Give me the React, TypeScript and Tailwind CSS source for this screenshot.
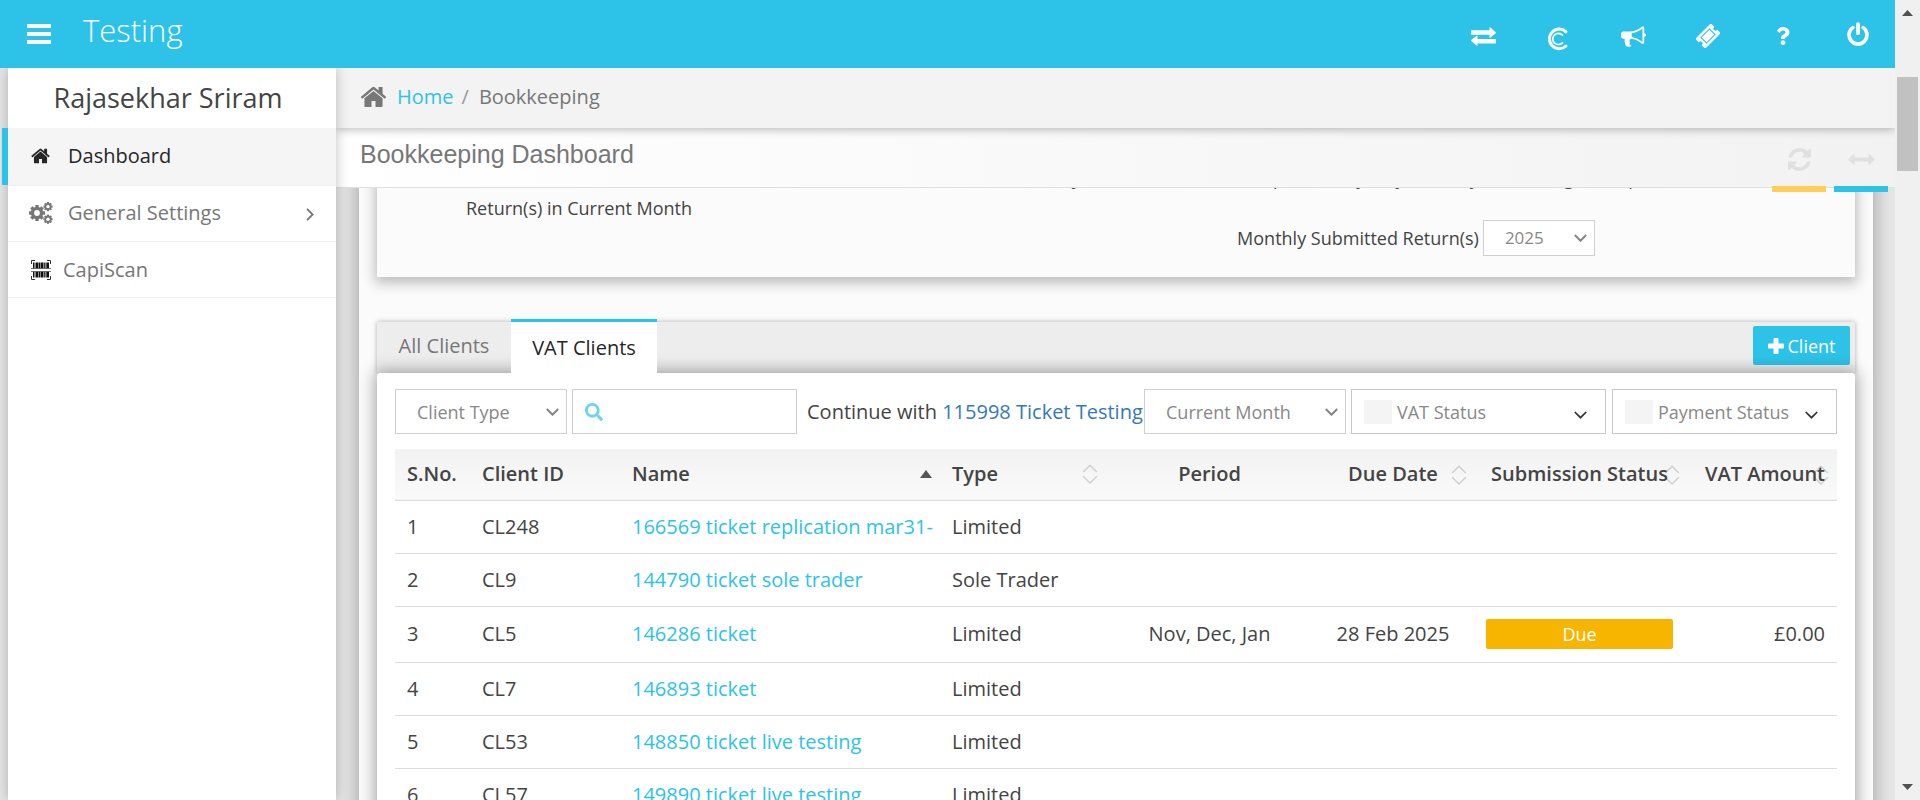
import React from "react";
import { FaQuestion, FaSearch } from "react-icons/fa";

function House({ className }: { className: string }) {
  return (
    <svg viewBox="0 200 1664 1400" className={className} fill="currentColor" aria-hidden="true">
      <path d="M1408 992v480q0 26-19 45t-45 19H960v-384H704v384H320q-26 0-45-19t-19-45V992q0-1 .5-3t.5-3l575-474 575 474q1 2 1 6zm223-69l-62 74q-8 9-21 11h-3q-13 0-21-7L832 424 140 1001q-12 8-24 7-13-2-21-11l-62-74q-8-10-7-23.500t11-21.500l719-599q32-26 76-26t76 26l244 204V288q0-14 9-23t23-9h192q14 0 23 9t9 23v408l219 182q10 8 11 21.500t-7 23.500z" />
    </svg>
  );
}

function Exchange() {
  return (
    <svg viewBox="0 0 25 19" className="h-[19px] w-[25px]" fill="currentColor" aria-hidden="true">
      <path d="M0 3.200h18.500V.6q0-.6.600-.4L24.800 5.200q.4.500 0 1l-5.700 4.600q-.6.200-.6-.4V7.700H0zM25 16.400H6.500v2q0 .6-.6.300L.2 14.100q-.4-.5 0-1L5.900 8.500q.6-.2.600.4v3H25z" />
    </svg>
  );
}

function CapiumLogo() {
  return (
    <svg viewBox="0 0 22 24" className="mt-1.5 h-6 w-[22px]" fill="none" stroke="currentColor" aria-hidden="true">
      <path d="M19 4.800A9.800 9.800 0 1 0 19 19" strokeWidth="3" strokeLinecap="round" />
      <path d="M15.500 8.200A5.600 5.600 0 1 0 15.500 15.800" strokeWidth="1.700" strokeLinecap="round" />
    </svg>
  );
}

function Bullhorn() {
  return (
    <svg viewBox="0 0 1792 1664" className="h-6 w-[25px]" fill="currentColor" aria-hidden="true">
      <path d="M1664 640q53 0 90.500 37.500T1792 768t-37.500 90.500T1664 896v384q0 52-38 90t-90 38q-417-347-812-380-58 19-91 66t-31 100.500 40 92.500q-20 33-23 65.500t6 58 33.500 55 48 50T768 1506q-29 58-111.500 83t-168.500 11.500T356 1545q-7-23-29.500-87.500t-32-94.500-23-89-15-101 3.500-98.500T282 1024H160q-66 0-113-47T0 864V672q0-66 47-113t113-47h480q435 0 896-384 52 0 90 38t38 90v384zm-128 604V290q-394 302-768 343v270q377 42 768 341z" />
    </svg>
  );
}

function Ticket() {
  return (
    <svg viewBox="0 0 24 24" className="h-6 w-6" aria-hidden="true">
      <g transform="rotate(-45 12 12)">
        <path
          d="M1.500 5.500h21v4a2.500 2.500 0 0 0 0 5v4h-21v-4a2.500 2.500 0 0 0 0-5z"
          fill="currentColor"
          stroke="currentColor"
          strokeLinejoin="round"
        />
        <rect x="6" y="8" width="12" height="8" fill="none" stroke="#2dc3e8" />
      </g>
    </svg>
  );
}

function Power() {
  return (
    <svg viewBox="0 0 22 24" className="-mt-1 h-6 w-[22px]" fill="none" stroke="currentColor" strokeLinecap="round" aria-hidden="true">
      <path d="M5.800 5.600a9 9 0 1 0 10.400 0" strokeWidth="3.600" />
      <path d="M11 2.200v9" strokeWidth="3.800" />
    </svg>
  );
}

function Gear({ cx, cy, r, hole, w }: { cx: number; cy: number; r: number; hole: number; w: number }) {
  return (
    <g>
      {[0, 45, 90, 135].map((angle) => (
        <rect key={angle} x={cx - w / 2} y={cy - r} width={w} height={r * 2} transform={`rotate(${angle} ${cx} ${cy})`} />
      ))}
      <circle cx={cx} cy={cy} r={r * 0.78} />
      <circle cx={cx} cy={cy} r={hole} fill="#fff" />
    </g>
  );
}

function Cogs() {
  return (
    <svg viewBox="0 0 24 22" className="h-[22px] w-6" fill="currentColor" aria-hidden="true">
      <Gear cx={8} cy={11} r={8} hole={2.9} w={3.4} />
      <Gear cx={19} cy={4.6} r={4.6} hole={1.7} w={2} />
      <Gear cx={19} cy={17.2} r={4.6} hole={1.7} w={2} />
    </svg>
  );
}

function Barcode() {
  return (
    <svg viewBox="0 0 20 20" className="h-5 w-5" aria-hidden="true">
      <path d="M.5 4V.5H4M16 .5h3.500V4M.5 16v3.500H4M16 19.500h3.500V16" fill="none" stroke="#333" />
      <path
        d="M2 2.500h1.500v6H2zM4.500 2.500h3v6h-3zM8 2.500h1.500v6H8zM10 2.500h2.500v6H10zM13.200 2.500h1.300v6h-1.300zM15.300 2.500H18v6h-2.700zM2 11.500h1.500v6H2zM4.500 11.500h3v6h-3zM8 11.500h1.500v6H8zM10 11.500h2.500v6H10zM13.200 11.500h1.300v6h-1.300zM15.300 11.500H18v6h-2.700z"
        fill="#111"
      />
      <path d="M0 8.500h20M0 11.500h20" stroke="#555" strokeWidth=".8" />
    </svg>
  );
}

function Refresh() {
  return (
    <svg viewBox="0 0 1536 1536" className="h-[23px] w-[23px]" fill="currentColor" aria-hidden="true">
      <path d="M1511 928q0 5-1 7-64 268-268 434.500T764 1536q-146 0-282.500-55T238 1324l-129 129q-19 19-45 19t-45-19-19-45V960q0-26 19-45t45-19h448q26 0 45 19t19 45-19 45l-137 137q71 66 161 102t187 36q134 0 250-65t186-179q11-17 53-117 8-23 30-23h192q13 0 22.500 9.500t9.500 22.500zm25-800v448q0 26-19 45t-45 19h-448q-26 0-45-19t-19-45 19-45l138-138Q969 256 768 256q-134 0-250 65T332 500q-11 17-53 117-8 23-30 23H50q-13 0-22.500-9.500T18 608v-7q65-268 270-434.500T768 0q146 0 284 55.500T1297 212l130-129q19-19 45-19t45 19 19 45z" />
    </svg>
  );
}

function ArrowsH() {
  return (
    <svg viewBox="0 0 27 11" className="h-[11px] w-[27px]" fill="currentColor" aria-hidden="true">
      <path d="M0 5.500L5.500.3q1-.5 1 .7v2.500h14V1q0-1.200 1-.7L27 5.500l-5.500 5.200q-1 .5-1-.7V7.500h-14V10q0 1.200-1 .7z" />
    </svg>
  );
}

function Chevron({ className, weight }: { className: string; weight: number }) {
  return (
    <svg viewBox="0 0 13 8" className={className} fill="none" stroke="currentColor" strokeWidth={weight} aria-hidden="true">
      <path d="M.8 1l5.700 5.700L12.200 1" />
    </svg>
  );
}

function SortIcon() {
  return (
    <svg viewBox="0 0 16 20" className="h-5 w-4" fill="none" stroke="#cfcfcf" strokeWidth="1.400" aria-hidden="true">
      <path d="M1.200 8L8 1.200 14.800 8M1.200 12.200L8 19l6.800-6.800" />
    </svg>
  );
}

function PlainSelect({ label, value, className, size }: { label: string; value: string; className: string; size: string }) {
  return (
    <div className={`relative shrink-0 ${className}`}>
      <select
        aria-label={label}
        className={`h-full w-full appearance-none border border-[#d0d0d0] bg-white pr-6 pl-[21px] text-[#888] ${size}`}
      >
        <option>{value}</option>
      </select>
      <Chevron className="pointer-events-none absolute top-1/2 right-2 h-2 w-[13px] -translate-y-1/2 text-[#858585]" weight={2} />
    </div>
  );
}

function MultiSelect({ label, className }: { label: string; className: string }) {
  return (
    <button
      type="button"
      className={`flex h-[45px] shrink-0 items-center border border-[#c8c8c8] bg-white pl-3 text-lg text-[#888] ${className}`}
    >
      <span className="mr-[5px] h-6 w-7 bg-[#f4f4f4]" />
      <span className="flex-1 text-left">{label}</span>
      <Chevron className="mt-1.5 mr-[18px] h-2 w-[13px] text-[#333]" weight={1.7} />
    </button>
  );
}

const clients = [
  { id: "CL248", name: "166569 ticket replication mar31-", type: "Limited" },
  { id: "CL9", name: "144790 ticket sole trader", type: "Sole Trader" },
  {
    id: "CL5",
    name: "146286 ticket",
    type: "Limited",
    period: "Nov, Dec, Jan",
    due: "28 Feb 2025",
    status: "Due",
    amount: "£0.00",
  },
  { id: "CL7", name: "146893 ticket", type: "Limited" },
  { id: "CL53", name: "148850 ticket live testing", type: "Limited" },
  { id: "CL57", name: "149890 ticket live testing", type: "Limited" },
];

const topButton = "flex h-8 w-8 items-center justify-center";

export default function App() {
  return (
    <div className="flex h-screen overflow-hidden bg-[#e6e6e6] font-['Open_Sans','Noto_Sans',sans-serif] text-[20px] text-[#444]">
      <div className="flex min-w-0 flex-1 flex-col overflow-hidden">
        <header className="relative z-30 flex h-[68px] shrink-0 items-center bg-[#2dc3e8] text-white">
          <button type="button" aria-label="Toggle menu" className="ml-[27px]">
            <svg viewBox="0 0 24 20" className="h-5 w-6" fill="currentColor" aria-hidden="true">
              <path d="M0 0h24v4H0zM0 8h24v4H0zM0 16h24v4H0z" />
            </svg>
          </button>
          <span className="mb-2 ml-8 text-[31px] font-light">Testing</span>
          <nav className="mr-[21px] ml-auto flex items-center gap-[43px] pt-1">
            <button type="button" aria-label="Switch" className={topButton}><Exchange /></button>
            <button type="button" aria-label="Capium" className={topButton}><CapiumLogo /></button>
            <button type="button" aria-label="Announcements" className={topButton}><Bullhorn /></button>
            <button type="button" aria-label="Tickets" className={topButton}><Ticket /></button>
            <button type="button" aria-label="Help" className={topButton}><FaQuestion className="h-[18px] w-[18px]" /></button>
            <button type="button" aria-label="Log out" className={topButton}><Power /></button>
          </nav>
        </header>

        <div className="flex min-h-0 flex-1">
          <aside className="z-20 ml-2 w-[328px] shrink-0 bg-white shadow-[0_0_12px_rgba(0,0,0,0.25)]">
            <div className="flex h-[60px] items-center justify-center pr-2 text-[27px] text-[#444]">Rajasekhar Sriram</div>
            <nav>
              <a
                href="#dashboard"
                className="-ml-1.5 flex h-[57px] items-center border-l-6 border-[#2dc3e8] bg-[#f5f5f5] pb-0.5 pl-[23px] text-[#262626]"
              >
                <House className="mr-[18px] h-4 w-[19px]" />
                Dashboard
              </a>
              <a href="#settings" className="flex h-[57px] items-center border-y border-[#f0f0f0] pb-0.5 pl-[21px] text-[#777]">
                <span className="mr-[15px]"><Cogs /></span>
                General Settings
                <svg
                  viewBox="0 0 8 13"
                  className="mt-1 mr-[22px] ml-auto h-[13px] w-2"
                  fill="none"
                  stroke="currentColor"
                  strokeWidth="1.800"
                  aria-hidden="true"
                >
                  <path d="M1 .8l5.700 5.700L1 12.200" />
                </svg>
              </a>
              <a href="#capiscan" className="flex h-14 items-center border-b border-[#f0f0f0] pl-[23px] text-[#777]">
                <span className="mr-3"><Barcode /></span>
                CapiScan
              </a>
            </nav>
          </aside>

          <main className="flex min-w-0 flex-1 flex-col">
            <div className="z-10 flex h-[60px] shrink-0 items-center bg-[#f3f3f3] pb-0.5 pl-6 text-[#777] shadow-[0_2px_8px_rgba(0,0,0,0.25)]">
              <House className="mr-2.5 h-[22px] w-[27px]" />
              <a href="#home" className="text-[#2dc3e8]">Home</a>
              <span className="mr-2.5 ml-2 text-[#999]">/</span>
              <span>Bookkeeping</span>
            </div>
            <div className="z-[5] flex h-[60px] shrink-0 items-start justify-between border-b border-[#e0e0e0] bg-linear-to-r from-white to-[#f2f2f2] pr-[7px] pl-6">
              <h1 className="pt-2 font-['Liberation_Sans',sans-serif] text-[25px] text-[#777]">Bookkeeping Dashboard</h1>
              <div className="flex gap-2 text-[#e0e0e0]">
                <button type="button" aria-label="Refresh" className="flex h-16 w-[54px] items-center justify-center border-b-6 border-[#ffce55] pt-1">
                  <Refresh />
                </button>
                <button type="button" aria-label="Toggle width" className="flex h-16 w-[54px] items-center justify-center border-b-6 border-[#2dc3e8] pt-1">
                  <ArrowsH />
                </button>
              </div>
            </div>

            <div className="min-h-0 flex-1 overflow-hidden pr-[22px] pl-[23px]">
              <div className="-mt-6 min-h-full bg-[#fbfbfb] px-[18px] shadow-[0_0_16px_3px_rgba(0,0,0,0.25)]">
                <section className="flex h-[113px] bg-[#fbfbfb] text-lg shadow-[0_4px_12px_2px_rgba(0,0,0,0.25)]">
                  <p className="w-[45%] pt-[30px] pl-[89px]">Return(s) in Current Month</p>
                  <div className="min-w-0 flex-1">
                    <p className="h-14 whitespace-nowrap">Only returns on this chart update daily, any monthly submitting client plan</p>
                    <div className="flex items-center gap-1 pl-[195px]">
                      <span>Monthly Submitted Return(s)</span>
                      <PlainSelect label="Year" value="2025" className="h-9 w-28" size="text-[17px]" />
                    </div>
                  </div>
                </section>

                <section className="pt-[42px]">
                  <div className="flex h-[54px] items-end">
                    <div className="flex h-[51px] flex-1 items-center bg-[#ededed] pr-[5px] shadow-[0_0_5px_rgba(0,0,0,0.3)]">
                      <button type="button" className="h-full w-[134px] pb-1 text-[#777]">All Clients</button>
                      <button
                        type="button"
                        className="relative z-10 h-[54px] w-[146px] self-end border-t-3 border-[#2dc3e8] bg-white text-[#262626]"
                      >
                        VAT Clients
                      </button>
                      <button
                        type="button"
                        className="mb-1 ml-auto flex h-[39px] w-[97px] items-center justify-center gap-1 rounded-xs bg-[#2dc3e8] text-lg text-white"
                      >
                        <svg viewBox="0 0 16 16" className="h-4 w-4" fill="currentColor" aria-hidden="true">
                          <path d="M5.500 1q0-1 1-1h3q1 0 1 1v4.500H15q1 0 1 1v3q0 1-1 1h-4.500V15q0 1-1 1h-3q-1 0-1-1v-4.500H1q-1 0-1-1v-3q0-1 1-1h4.500z" />
                        </svg>
                        Client
                      </button>
                    </div>
                  </div>

                  <div className="relative rounded-[3px] bg-white px-[18px] pt-4 pb-10 shadow-[0_0_16px_2px_rgba(0,0,0,0.35)]">
                    <div className="flex items-center">
                      <PlainSelect label="Client type" value="Client Type" className="h-[45px] w-[172px]" size="text-lg" />
                      <label className="ml-[5px] flex h-[45px] w-[225px] shrink-0 items-center border border-[#d0d0d0] bg-white pl-3">
                        <FaSearch className="h-[18px] w-[18px] text-[#6dd5ef]" />
                        <input type="text" aria-label="Search clients" className="h-full min-w-0 flex-1 px-2 outline-none" />
                      </label>
                      <span className="min-w-0 flex-1 pl-2.5 whitespace-nowrap">
                        Continue with <a href="#ticket" className="text-[#337ab7]">115998 Ticket Testing</a>
                      </span>
                      <PlainSelect label="Month" value="Current Month" className="h-[45px] w-[202px]" size="text-lg" />
                      <MultiSelect label="VAT Status" className="ml-[5px] w-[255px]" />
                      <MultiSelect label="Payment Status" className="ml-1.5 w-[225px]" />
                    </div>

                    <table className="mt-[15px] w-full table-fixed text-left">
                      <colgroup>
                        <col className="w-[75px]" />
                        <col className="w-[150px]" />
                        <col />
                        <col className="w-[168px]" />
                        <col className="w-[203px]" />
                        <col className="w-[164px]" />
                        <col className="w-[209px]" />
                        <col className="w-[153px]" />
                      </colgroup>
                      <thead>
                        <tr className="h-[51px] border-b border-[#ddd] bg-linear-to-b from-[#f2f2f2] to-[#fafafa]">
                          <th className="pl-3 font-semibold whitespace-nowrap">S.No.</th>
                          <th className="pl-3 font-semibold">Client ID</th>
                          <th className="pl-3 font-semibold">
                            <div className="flex items-center justify-between pr-2">
                              Name
                              <svg viewBox="0 0 12 8" className="h-2 w-3" fill="#555" aria-hidden="true"><path d="M6 0l6 8H0z" /></svg>
                            </div>
                          </th>
                          <th className="pl-3 font-semibold">
                            <div className="flex items-center justify-between pr-2.5">Type <SortIcon /></div>
                          </th>
                          <th className="text-center font-semibold">Period</th>
                          <th className="relative text-center font-semibold">
                            Due Date
                            <span className="absolute top-4 right-2"><SortIcon /></span>
                          </th>
                          <th className="relative text-center font-semibold whitespace-nowrap">
                            <span className="absolute top-4 right-1"><SortIcon /></span>
                            <span className="relative">Submission Status</span>
                          </th>
                          <th className="relative pr-3 text-right font-semibold whitespace-nowrap">
                            <span className="absolute top-4 right-2"><SortIcon /></span>
                            <span className="relative">VAT Amount</span>
                          </th>
                        </tr>
                      </thead>
                      <tbody>
                        {clients.map((c, i) => (
                          <tr key={c.id} className={c.status ? "h-14 border-b border-[#ddd]" : "h-[53px] border-b border-[#ddd]"}>
                            <td className="pl-3">{i + 1}</td>
                            <td className="pl-3">{c.id}</td>
                            <td className="pl-3 whitespace-nowrap"><a href={`#${c.id}`} className="text-[#2dc3e8]">{c.name}</a></td>
                            <td className="pl-3">{c.type}</td>
                            <td className="text-center">{c.period}</td>
                            <td className="text-center">{c.due}</td>
                            <td className="px-[11px]">
                              {c.status && (
                                <div className="flex h-[30px] items-center justify-center rounded-xs bg-[#f7b500] text-lg text-white">{c.status}</div>
                              )}
                            </td>
                            <td className="pr-3 text-right">{c.amount}</td>
                          </tr>
                        ))}
                      </tbody>
                    </table>
                  </div>
                </section>
              </div>
            </div>
          </main>
        </div>
      </div>

      <div className="flex w-[25px] shrink-0 flex-col items-center justify-between bg-[#f0f0f0]" aria-hidden="true">
        <div className="flex flex-col items-center">
          <svg viewBox="0 0 11 6" className="mt-2.5 h-1.5 w-[11px]" fill="#505050"><path d="M5.500 0L11 6H0z" /></svg>
          <div className="mt-[61px] h-[94px] w-[21px] bg-[#c1c1c1]" />
        </div>
        <svg viewBox="0 0 11 6" className="mb-2.5 h-1.5 w-[11px]" fill="#505050"><path d="M5.500 6L11 0H0z" /></svg>
      </div>
    </div>
  );
}
